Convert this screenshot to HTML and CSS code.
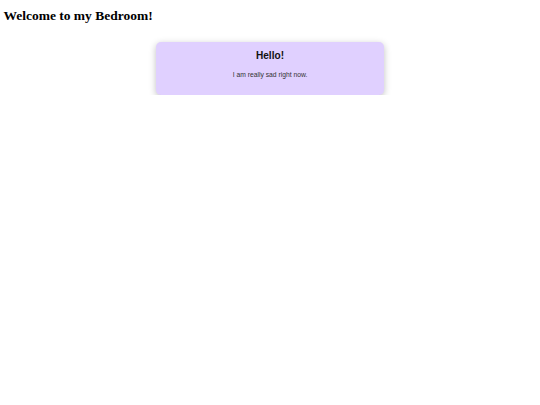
FILE: index.html
```html
<!DOCTYPE html>
<html>
<head>
<meta charset="utf-8">
<link rel="stylesheet" href="styles.css">
</head>
<body>
<h1 class="title">Welcome to my Bedroom!</h1>
<div class="wrap">
  <div class="card">
    <h2 class="card-title">Hello!</h2>
    <p class="card-text">I am really sad right now.</p>
  </div>
</div>
</body>
</html>
```
FILE: styles.css
```css
html, body {
  margin: 0;
  padding: 0;
  background: #ffffff;
}
.title {
  font-family: "Liberation Serif", "Times New Roman", serif;
  font-size: 13.5px;
  font-weight: bold;
  line-height: 15.5px;
  margin: 7.5px 0 0 3.4px;
  color: #000;
}
.wrap {
  display: flex;
  justify-content: center;
  margin-top: 18.5px;
}
.card {
  width: 228px;
  box-sizing: border-box;
  background: #e0d0ff;
  border-radius: 5px;
  box-shadow: 0 2px 7px rgba(0, 0, 0, 0.25);
  padding: 8px 8.4px 16.5px;
  text-align: center;
  font-family: "Liberation Sans", Arial, sans-serif;
}
.card-title {
  margin: 0;
  font-size: 10.1px;
  line-height: 11.5px;
  font-weight: bold;
  color: #111;
}
.card-text {
  margin: 9.5px 0 0;
  font-size: 6.75px;
  line-height: 7.8px;
  color: #333;
}
```
